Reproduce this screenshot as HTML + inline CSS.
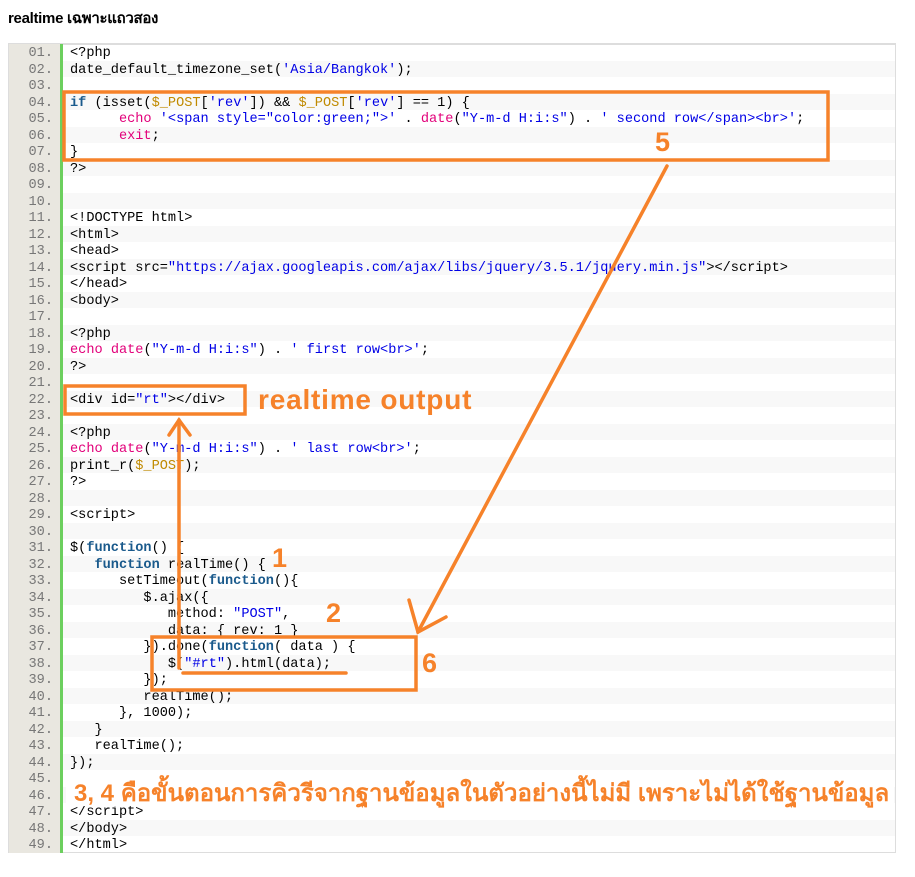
<!DOCTYPE html>
<html><head><meta charset="utf-8"><style>
body{margin:0;width:915px;height:877px;background:#fff;position:relative;overflow:hidden;font-family:"Liberation Sans",sans-serif}
h1{position:absolute;left:8px;top:6px;margin:0;font-size:15px;font-weight:bold;color:#000;font-family:"Liberation Sans","Noto Sans CJK SC",sans-serif;letter-spacing:-0.3px}
#box{position:absolute;left:8px;top:43px;width:888px;height:810px;border:1px solid #ddd;border-top:2px solid #ddd;background:#fff;box-sizing:border-box}
.r{position:absolute;left:9px;width:886px;height:16.5px;font-family:"Liberation Mono",monospace;font-size:13.6px;line-height:16.5px;white-space:pre;color:#000}
.r:nth-child(even){background:#f8f8f8}
.n{position:absolute;left:0;top:0;width:44px;padding-right:7px;height:16.5px;background:#e9e7e0;color:#777;text-align:right}
.n::after{content:"";position:absolute;left:51px;top:0;width:3px;height:17px;background:#6ccf5e}
.t{position:relative;top:2px}
.c{position:absolute;left:61px;top:2px}
.k{color:#1a5a8c;font-weight:bold}.s{color:#0000e6}.v{color:#c08a00}.p{color:#e2007a}
</style></head><body>
<h1>realtime เฉพาะแถวสอง</h1>
<div id="box"></div>
<div id="rows"></div>
<script>
var L=[
'&lt;?php',
'date_default_timezone_set(<span class=s>\'Asia/Bangkok\'</span>);',
'',
'<span class=k>if</span> (isset(<span class=v>$_POST</span>[<span class=s>\'rev\'</span>]) &amp;&amp; <span class=v>$_POST</span>[<span class=s>\'rev\'</span>] == 1) {',
'      <span class=p>echo</span> <span class=s>\'&lt;span style="color:green;"&gt;\'</span> . <span class=p>date</span>(<span class=s>"Y-m-d H:i:s"</span>) . <span class=s>\' second row&lt;/span&gt;&lt;br&gt;\'</span>;',
'      <span class=p>exit</span>;',
'}',
'?&gt;',
'','',
'&lt;!DOCTYPE html&gt;','&lt;html&gt;','&lt;head&gt;',
'&lt;script src=<span class=s>"https://ajax.googleapis.com/ajax/libs/jquery/3.5.1/jquery.min.js"</span>&gt;&lt;/script&gt;',
'&lt;/head&gt;','&lt;body&gt;','',
'&lt;?php',
'<span class=p>echo</span> <span class=p>date</span>(<span class=s>"Y-m-d H:i:s"</span>) . <span class=s>\' first row&lt;br&gt;\'</span>;',
'?&gt;','',
'&lt;div id=<span class=s>"rt"</span>&gt;&lt;/div&gt;','',
'&lt;?php',
'<span class=p>echo</span> <span class=p>date</span>(<span class=s>"Y-m-d H:i:s"</span>) . <span class=s>\' last row&lt;br&gt;\'</span>;',
'print_r(<span class=v>$_POST</span>);',
'?&gt;','',
'&lt;script&gt;','',
'$(<span class=k>function</span>() {',
'   <span class=k>function</span> realTime() {',
'      setTimeout(<span class=k>function</span>(){',
'         $.ajax({',
'            method: <span class=s>"POST"</span>,',
'            data: { rev: 1 }',
'         }).done(<span class=k>function</span>( data ) {',
'            $(<span class=s>"#rt"</span>).html(data);',
'         });',
'         realTime();',
'      }, 1000);',
'   }',
'   realTime();',
'});','','',
'&lt;/script&gt;','&lt;/body&gt;','&lt;/html&gt;'];
var h='';for(var i=0;i<L.length;i++){var n=(i+1<10?'0':'')+(i+1)+'.';h+='<div class=r style="top:'+(44+i*16.5)+'px"><span class=n><span class=t>'+n+'</span></span><span class=c>'+L[i]+'</span></div>';}
document.getElementById('rows').innerHTML=h;
</script>
<div style="position:absolute;left:66px;top:773px;width:828px;height:33px;background:#fff"></div>
<div style="position:absolute;left:74px;top:773px;font-family:'Liberation Sans','Noto Sans CJK SC','WenQuanYi Zen Hei',sans-serif;font-size:24px;font-weight:bold;color:#f6822a;white-space:nowrap;letter-spacing:0px">3, 4 คือขั้นตอนการคิวรีจากฐานข้อมูลในตัวอย่างนี้ไม่มี เพราะไม่ได้ใช้ฐานข้อมูล</div>
<svg style="position:absolute;left:0;top:0" width="915" height="877">
<g fill="none" stroke="#f6822a" stroke-width="3.5" stroke-linecap="round">
<rect x="64" y="92" width="764" height="68"/>
<rect x="65" y="386" width="180" height="28"/>
<rect x="152" y="637" width="264" height="53"/>
<line x1="667" y1="166" x2="418" y2="632"/>
<polyline points="409,600 418,632 446,617"/>
<line x1="179" y1="668" x2="179" y2="420"/>
<polyline points="169,435 179,420 190,435"/>
<line x1="183" y1="673" x2="346" y2="673"/>
</g>
<g fill="#f6822a" font-family="Liberation Sans,sans-serif" font-weight="bold">
<text x="258" y="409" font-size="28" letter-spacing="0.8">realtime output</text>
<text x="272" y="567" font-size="27">1</text>
<text x="326" y="622" font-size="27">2</text>
<text x="655" y="151" font-size="27">5</text>
<text x="422" y="672" font-size="27">6</text>
</g>
</svg>
</body></html>
